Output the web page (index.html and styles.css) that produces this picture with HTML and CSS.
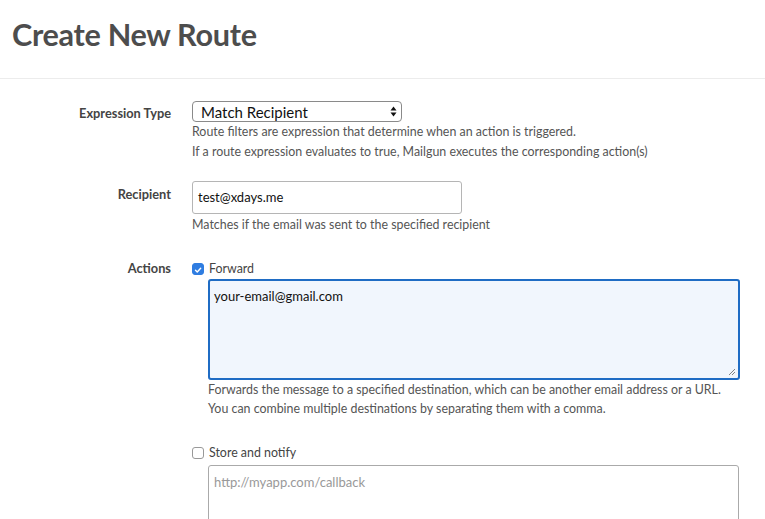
FILE: index.html
```html
<!DOCTYPE html>
<html>
<head>
<meta charset="utf-8">
<link rel="stylesheet" href="styles.css">
</head>
<body>
<div class="page">
  <h1 class="title">Create New Route</h1>
  <hr class="divider">
  <div class="form">
    <div class="row row-expr">
      <div class="label">Expression Type</div>
      <div class="field">
        <div class="select">
          <span>Match Recipient</span>
          <svg class="arrows" width="7" height="11" viewBox="0 0 7 11"><path d="M3.5 0.5 L6.5 4.5 L0.5 4.5 Z" fill="#111"/><path d="M3.5 10.5 L6.5 6.5 L0.5 6.5 Z" fill="#111"/></svg>
        </div>
        <p class="help">Route filters are expression that determine when an action is triggered.<br>If a route expression evaluates to true, Mailgun executes the corresponding action(s)</p>
      </div>
    </div>
    <div class="row row-recipient">
      <div class="label">Recipient</div>
      <div class="field">
        <div class="input">test@xdays.me</div>
        <p class="help">Matches if the email was sent to the specified recipient</p>
      </div>
    </div>
    <div class="row row-actions">
      <div class="label">Actions</div>
      <div class="field">
        <div class="check">
          <span class="box checked"><svg width="12" height="12" viewBox="0 0 12 12"><path d="M3 6.2 L5.1 8.3 L9.2 3.8" stroke="#fff" stroke-width="1.7" fill="none" stroke-linecap="round" stroke-linejoin="round"/></svg></span>
          <span class="check-label">Forward</span>
        </div>
        <div class="sub sub-forward">
          <div class="textarea focused">your-email@gmail.com<svg class="grip" width="8" height="8" viewBox="0 0 8 8"><path d="M7 1 L1 7 M7 4 L4 7" stroke="#666" stroke-width="0.8"/></svg></div>
          <p class="help">Forwards the message to a specified destination, which can be another email address or a URL.<br>You can combine multiple destinations by separating them with a comma.</p>
        </div>
        <div class="check check-store">
          <span class="box"></span>
          <span class="check-label">Store and notify</span>
        </div>
        <div class="sub sub-store">
          <div class="textarea placeholder">http://myapp.com/callback</div>
        </div>
      </div>
    </div>
  </div>
</div>
</body>
</html>
```
FILE: styles.css
```css
* { box-sizing: border-box; }
html, body { margin: 0; padding: 0; background: #fff; }
body { font-family: "Lato", "Open Sans", sans-serif; color: #555; overflow: hidden; height: 519px; }
.page { padding: 0; }
.title { margin: 0; padding: 16px 0 0 12px; height: 78px; font-size: 30.6px; font-weight: 700; color: #4d4d4d; letter-spacing: -0.3px; line-height: 38px; }
.divider { margin: 0; border: 0; border-top: 1px solid #ececec; height: 0; }
.form { padding-top: 22px; }
.row { display: flex; }
.label { width: 171px; text-align: right; font-weight: 700; font-size: 12.8px; color: #444; padding-top: 4px; flex: none; }
.field { margin-left: 21px; flex: 1; }
.select { width: 210px; height: 21px; border: 1px solid #8a8a8a; border-radius: 4px; display: flex; align-items: center; justify-content: space-between; padding: 0 4px 0 8px; font-size: 15px; color: #111; }
.arrows { display: block; }
.help { margin: 0; font-size: 12.4px; line-height: 19.5px; color: #555; }
.row-recipient { margin-top: 20px; }
.row-recipient .label { padding-top: 5px; }
.input { width: 270px; height: 33px; border: 1px solid #b5b5b5; border-radius: 3px; font-size: 13px; color: #111; padding: 7px 0 0 5px; }
.row-recipient .help { margin-top: 1px; }
.row-actions { margin-top: 23px; }
.row-actions .label { padding-top: 2px; }
.check { display: flex; align-items: center; height: 16px; margin-top: 3px; }
.box { width: 12px; height: 12px; border-radius: 3px; border: 1px solid #999; background: #fff; display: inline-flex; flex: none; }
.box.checked { background: #2f7de1; border-color: #2f7de1; }
.check-label { margin-left: 5px; font-size: 12.4px; color: #444; }
.sub { margin-left: 16px; margin-top: 1px; }
.sub-forward { margin-top: 2px; }
.textarea { position: relative; width: 532px; height: 101px; border: 1px solid #aaa; border-radius: 3px; font-size: 13px; color: #111; padding: 8px 0 0 5px; }
.textarea.focused { border: 2px solid #1f6cc4; background: #f1f6fd; padding: 7px 0 0 4px; }
.grip { position: absolute; right: 2px; bottom: 2px; }
.textarea.placeholder { color: #999; height: 70px; width: 531px; }
.check-store { margin-top: 26px; }
.sub-store { margin-top: 4px; }
```
